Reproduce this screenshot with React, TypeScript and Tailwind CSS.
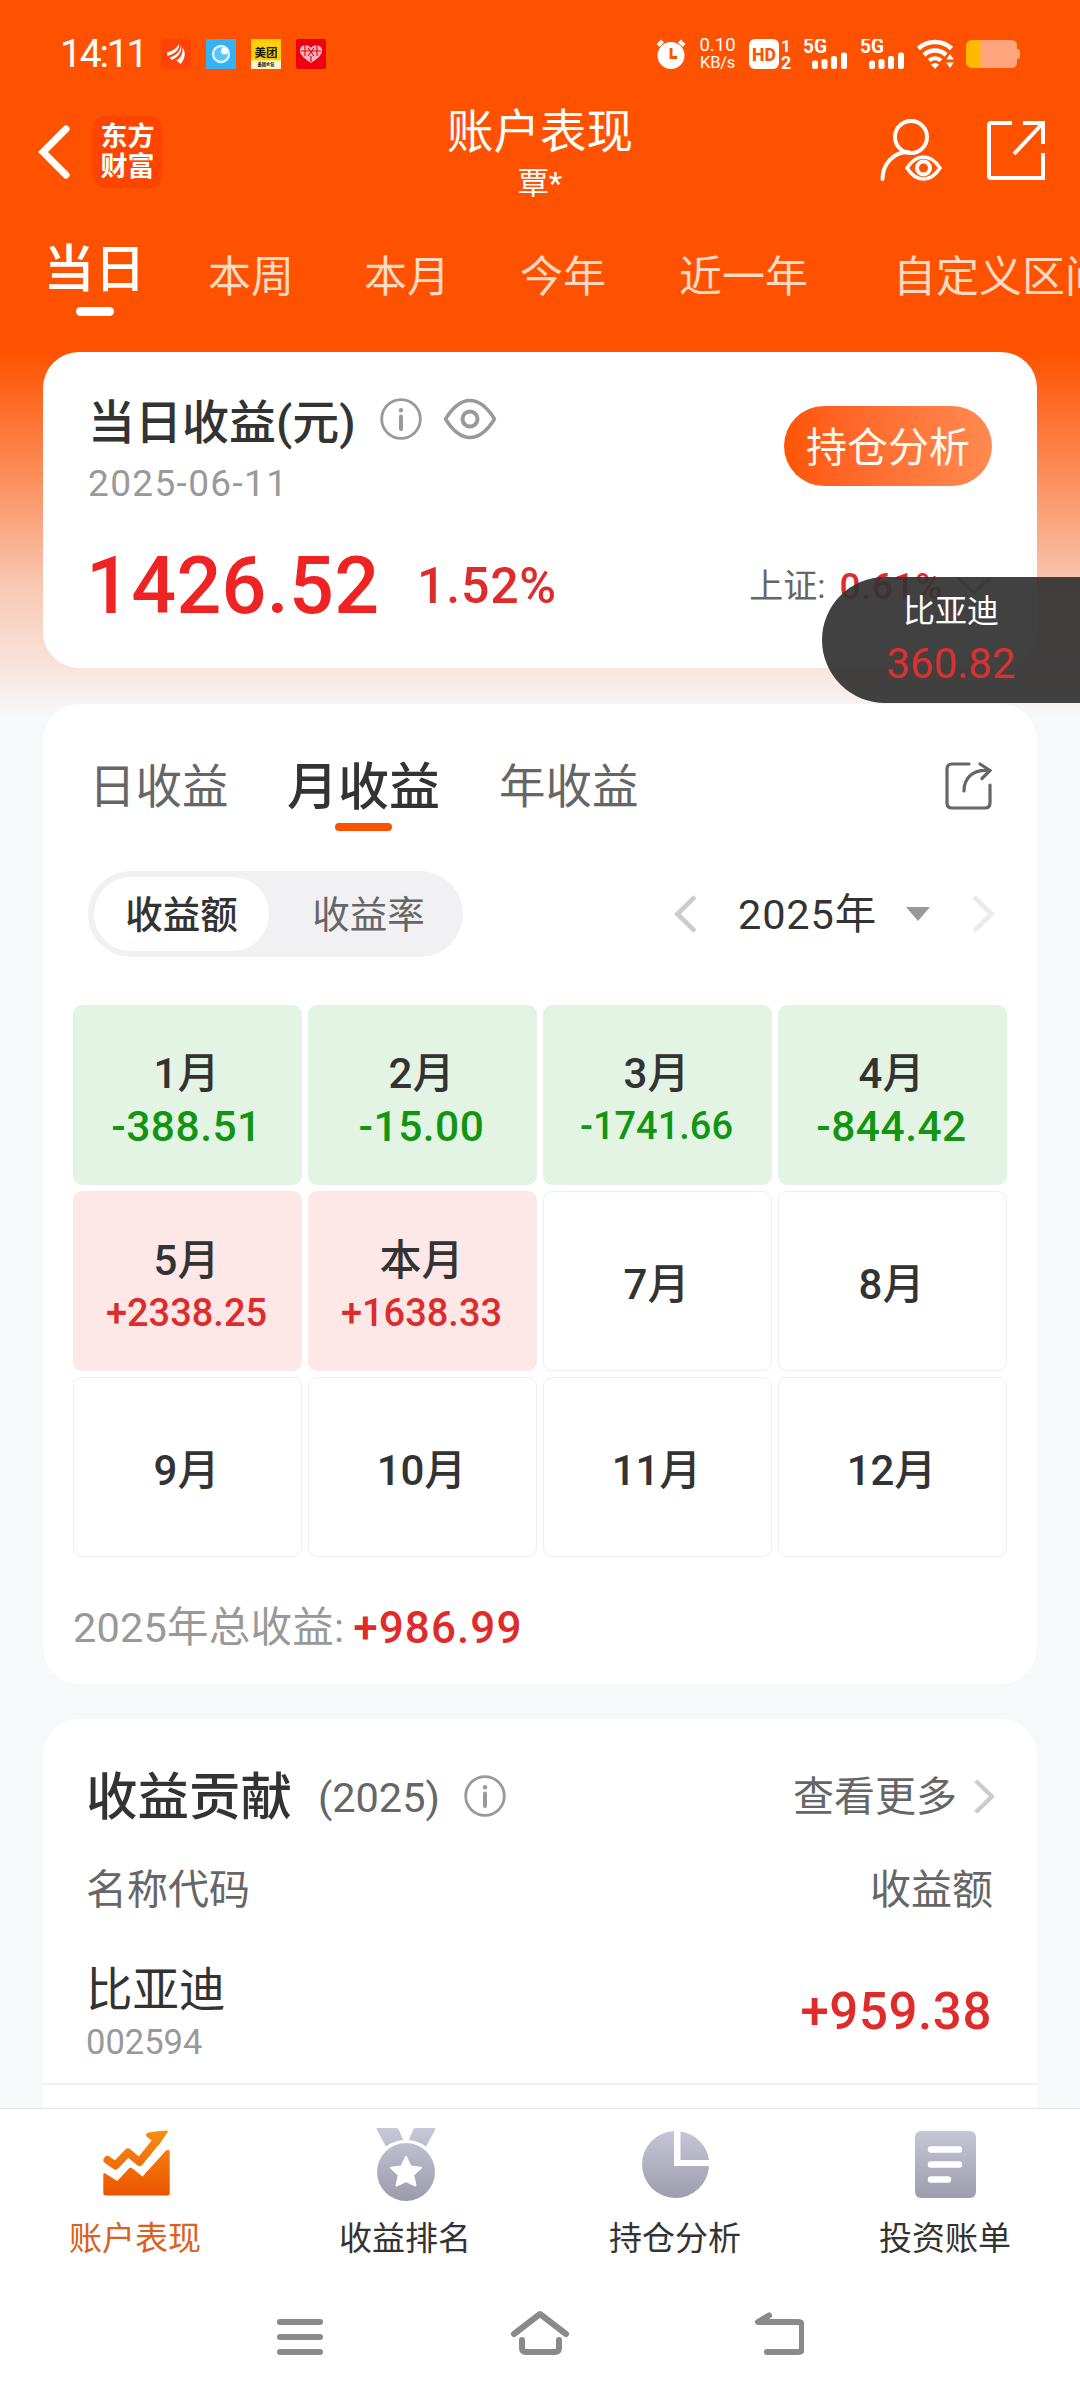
import React, { useState } from 'react';
import clsx from 'clsx';

const periods = [
  { label: '本周', className: 'ml-[63px]' },
  { label: '本月', className: 'ml-[70px]' },
  { label: '今年', className: 'ml-[70px]' },
  { label: '近一年', className: 'ml-[73px]' },
  { label: '自定义区间', className: 'ml-[85px]' },
];

const months = [
  { label: '1月', value: '-388.51' },
  { label: '2月', value: '-15.00' },
  { label: '3月', value: '-1741.66' },
  { label: '4月', value: '-844.42' },
  { label: '5月', value: '+2338.25' },
  { label: '本月', value: '+1638.33' },
  { label: '7月' },
  { label: '8月' },
  { label: '9月' },
  { label: '10月' },
  { label: '11月' },
  { label: '12月' },
];

const InfoIcon = ({ className }: { className?: string }) => (
  <svg className={className} width="42" height="42" viewBox="0 0 42 42" fill="none">
    <circle cx="21" cy="21" r="19.3" stroke="#999" strokeWidth="2.8" />
    <circle cx="21" cy="12.3" r="2.2" fill="#999" />
    <path d="M21 18.5v12.5" stroke="#999" strokeWidth="4" strokeLinecap="round" />
  </svg>
);

const Chevron = ({ color, left, size = 38, className }: { color: string; left?: boolean; size?: number; className?: string }) => (
  <svg className={className} width={size * 0.6} height={size} viewBox="0 0 24 40" fill="none">
    <path d={left ? 'M22 2 3.5 20 22 38' : 'M2 2 20.5 20 2 38'} stroke={color} strokeWidth="5" />
  </svg>
);

const Signal = ({ className }: { className?: string }) => (
  <svg className={className} width="46" height="30" viewBox="0 0 46 30" fill="#fff">
    <text x="0" y="14" fontSize="19.5" fontWeight="700" textLength="24" lengthAdjust="spacingAndGlyphs">5G</text>
    <rect x="9" y="21.5" width="6" height="8.5" rx="2.2" />
    <rect x="18.5" y="20" width="6" height="10" rx="2.2" />
    <rect x="28" y="17" width="6" height="13" rx="2.2" />
    <rect x="38" y="13.5" width="6" height="16.5" rx="2.2" />
  </svg>
);

const StatusBar = () => (
  <div className="flex h-[100px] shrink-0 items-center pt-[8px] pr-[59px] pl-[60px] text-white">
    <span className="w-[101px] text-[39px] leading-none tracking-[-2.2px]">14:11</span>
    <div className="flex gap-[15px]">
      <svg width="30" height="30" viewBox="0 0 30 30">
        <rect width="30" height="30" rx="3" fill="#ff4208" />
        <path d="M6 13.500C12 12 16 9 18 5c1 5-4 10-11.500 12zM8.500 18.500c7-2 11-6 11.500-12.500 1.500 7-3 12.500-9.500 15zM15.500 21.500c4.500-3 6.500-7 6-13 3.500 5 3 11-2 16.500z" fill="#fff" />
      </svg>
      <svg width="30" height="30" viewBox="0 0 30 30">
        <rect width="30" height="30" fill="#35b2f4" />
        <circle cx="15" cy="15" r="8" fill="#5cc3fa" stroke="#d5f3ff" strokeWidth="2.4" />
        <circle cx="18.5" cy="12" r="3.4" fill="#fff" />
      </svg>
      <svg width="30" height="30" viewBox="0 0 30 30">
        <rect width="30" height="30" rx="1" fill="#ffd00a" />
        <rect y="21.500" width="30" height="8.500" fill="#fff6d0" />
        <text x="15" y="18" fontSize="11.500" fontWeight="700" textAnchor="middle" fill="#1a1a00">美团</text>
        <text x="15" y="27.300" fontSize="4.200" fontWeight="900" textAnchor="middle" fill="#1a1a00">美团众包</text>
      </svg>
      <svg width="30" height="30" viewBox="0 0 30 30">
        <rect width="30" height="30" rx="2" fill="#ee0011" />
        <path d="M15 24C9 20 4 16.500 4 11.500 4 5.500 12 4.500 15 9c3-4.500 11-3.500 11 2.500C26 16.500 21 20 15 24z" fill="#f9b9bd" />
        <path d="M9 6v11M21 6v11M5 12h20M12 9l6 8M18 9l-6 8M15 17v6" stroke="#ee0011" strokeWidth="1.200" />
      </svg>
    </div>

    <div className="ml-auto flex items-center">
      <svg width="30" height="30" viewBox="0 0 30 30" fill="none">
        <circle cx="15" cy="16.500" r="13.500" fill="#fff" />
        <path d="M2 6.500 6.500 2M28 6.500 23.500 2" stroke="#fff" strokeWidth="4" />
        <path d="M15 9v9.500h6" stroke="#ff5200" strokeWidth="2.800" />
      </svg>
      <div className="ml-[13px] w-[37px] text-center text-[18.500px] leading-[17px]">
        <div>0.10</div>
        <div className="text-[16.500px] tracking-[-0.300px]">KB/s</div>
      </div>
      <svg className="ml-[13px]" width="44" height="31" viewBox="0 0 44 31">
        <rect width="30" height="30" rx="6" fill="#fff" />
        <text x="15" y="21.500" fontSize="18" fontWeight="800" textAnchor="middle" fill="#ff5200" textLength="24" lengthAdjust="spacingAndGlyphs">HD</text>
        <text x="32" y="12.500" fontSize="17" fontWeight="700" fill="#fff">1</text>
        <text x="32" y="30" fontSize="18" fontWeight="700" fill="#fff">2</text>
      </svg>
      <Signal className="ml-[10px]" />
      <Signal className="ml-[11px]" />
      <svg className="ml-[11px]" width="38" height="30" viewBox="0 0 38 30" fill="none">
        <path d="M1.500 9.500a24 24 0 0 1 33 0" stroke="#fff" strokeWidth="4.500" />
        <path d="M7 16a16 16 0 0 1 22 0" stroke="#fff" strokeWidth="4.500" />
        <path d="M12 21.500a9 9 0 0 1 12 0" stroke="#fff" strokeWidth="4" />
        <path d="M14 25.500q4-3 8 0l-4 4.500z" fill="#fff" />
        <path d="m33 15 3.800 5.500h-7.600zM33 29l3.800-5.500h-7.600z" fill="#fff" />
      </svg>
      <svg className="ml-[11px]" width="55" height="28" viewBox="0 0 55 28">
        <path d="M7 0h38q6 0 6 6v3q3 0 3 3v4q0 3-3 3v3q0 6-6 6H7q-7 0-7-7V7q0-7 7-7z" fill="#ffa57d" />
        <path d="M14.500 0H7Q0 0 0 7v14q0 7 7 7h7.500z" fill="#ffb900" />
      </svg>
    </div>
  </div>
);

const Header = () => (
  <div className="grid h-[104px] shrink-0 grid-cols-[1fr_auto_1fr] text-white">
    <div className="flex h-[103px] items-center pl-[38px]">
      <svg width="32" height="54" viewBox="0 0 32 54" fill="none">
        <path d="M28 4 5 27l23 23" stroke="#fff" strokeWidth="7" strokeLinecap="round" />
      </svg>
      <div className="ml-[22px] flex h-[72px] w-[71px] flex-col items-center justify-center rounded-[14px] bg-[#ff4400] text-[27px] leading-[30px] font-bold">
        <span>东方</span>
        <span>财富</span>
      </div>
    </div>
    <div className="flex flex-col items-center pt-[6px]">
      <h1 className="text-[46.500px] leading-[52px]">账户表现</h1>
      <span className="mt-[8px] text-[31px] leading-[36px]">覃*</span>
    </div>
    <div className="flex h-[100px] items-center justify-end pr-[34px]">
      <svg width="64" height="64" viewBox="0 0 64 64" fill="none" stroke="#fff" strokeWidth="4">
        <circle cx="33" cy="19" r="16" />
        <path d="M4.500 61c0-15 11-27 26-27" strokeLinecap="round" />
        <path d="M29 50q7-11 16.500-11T62 50q-7 11-16.500 11T29 50z" strokeWidth="3.500" />
        <circle cx="45.500" cy="50" r="6.500" />
      </svg>
      <svg className="ml-[44px]" width="60" height="62" viewBox="0 0 60 62" fill="none" stroke="#fff" strokeWidth="4">
        <path d="M26 4H5Q3 4 3 6v51q0 2 2 2h52V34M37 4h20v21M57 4 28 35" />
      </svg>
    </div>
  </div>
);

const SummaryCard = () => (
  <section className="mx-[43px] h-[316px] shrink-0 rounded-[36px] bg-white px-[45px]">
    <div className="flex">
      <div>
        <div className="flex items-center pt-[41px]">
          <h2 className="text-[47px] leading-[60px] font-medium text-[#333]">当日收益(元)</h2>
          <InfoIcon className="mb-[8px] ml-[24px]" />
          <svg className="mb-[8px] ml-[21px]" width="54" height="42" viewBox="0 0 54 42" fill="none" stroke="#999" strokeWidth="3.500">
            <path d="M2.500 21Q14 2.500 27 2.500T51.500 21Q40 39.500 27 39.500T2.500 21z" strokeLinejoin="round" />
            <circle cx="27" cy="21" r="7.500" strokeWidth="4" />
          </svg>
        </div>
        <div className="mt-[9px] text-[37px] leading-[44px] tracking-[1.350px] text-[#999]">2025-06-11</div>
      </div>
      <button className="mt-[54px] ml-auto h-[80px] w-[208px] rounded-full bg-linear-to-r from-[#ff5400] to-[#ff8a50] text-[41px] leading-[84px] text-[#fff8ee]">
        持仓分析
      </button>
    </div>
    <div className="mt-[35px] flex h-[90px] items-center">
      <span className="ml-[-2px] w-[331px] text-[79px] leading-none font-medium tracking-[0.300px] text-[#ee2424]">1426.52</span>
      <span className="text-[50px] leading-none font-medium tracking-[0.800px] text-[#e02b2b]">1.52%</span>
      <div className="ml-auto flex items-center text-[34px] leading-none">
        <span className="text-[#666]">上证:</span>
        <span className="ml-[14px] text-[37px] font-medium tracking-[0.600px] text-[#e02b2b]">0.61%</span>
        <svg className="ml-[13px]" width="36" height="20" viewBox="0 0 36 20" fill="none">
          <path d="m2 2 16 15L34 2" stroke="#999" strokeWidth="3" />
        </svg>
      </div>
    </div>
  </section>
);

const MonthCell = ({ label, value }: { label: string; value?: string }) => (
  <div
    className={clsx(
      'flex h-[180px] flex-col items-center rounded-[9px] pr-[2px]',
      !value && 'justify-center border-[1.500px] border-[#eee] bg-white pt-[7px]',
      value?.startsWith('-') && 'bg-[#e3f4e4] pt-[41px] text-[#129612]',
      value?.startsWith('+') && 'bg-[#fde8e7] pt-[42px] text-[#dc2d2d]'
    )}
  >
    <span className="text-[42px] leading-[56px] font-medium text-[#333]">{label}</span>
    {value && (
      <span className={clsx('leading-[49px] font-medium', value.length > 7 ? 'text-[38px]' : 'text-[42.500px] tracking-[0.500px]')}>{value}</span>
    )}
  </div>
);

const ProfitCalendar = () => {
  const [mode, setMode] = useState('amount');

  return (
    <section className="mx-[43px] mt-[36px] h-[980px] shrink-0 rounded-[36px] bg-white">
      <div className="flex h-[167px] items-center pr-[45px] pl-[46px] text-[#666]">
        <span className="w-[198px] text-[46.500px]">日收益</span>
        <div className="relative w-[212px] pt-[2px] text-[51px] font-medium text-[#333]">
          月收益
          <span className="absolute bottom-[-4px] left-[48px] h-[8px] w-[57px] rounded-full bg-[#ff5200]" />
        </div>
        <span className="text-[46.500px]">年收益</span>
        <svg className="mb-[6px] ml-auto" width="48" height="50" viewBox="0 0 48 50" fill="none" stroke="#666" strokeWidth="3.200" strokeLinecap="round">
          <path d="M25 4H8Q3 4 3 9v34q0 5 5 5h33q5 0 5-5V25" />
          <path d="M20 31C20 18 29 9 45 10.500M36 4l10 6.500-8 8" />
        </svg>
      </div>

      <div className="flex h-[86px] items-center pr-[42px] pl-[45px]">
        <div className="flex h-[86px] w-[375px] rounded-full bg-[#f1f1f4] p-[6px] text-[37.500px]">
          <button
            onClick={() => setMode('amount')}
            className={clsx('w-[175px] rounded-full pt-[3px]', mode === 'amount' ? 'bg-white font-medium text-[#333]' : 'text-[#666]')}
          >
            收益额
          </button>
          <button
            onClick={() => setMode('rate')}
            className={clsx('ml-[12px] w-[175px] rounded-full pt-[3px]', mode === 'rate' ? 'bg-white font-medium text-[#333]' : 'text-[#666]')}
          >
            收益率
          </button>
        </div>
        <Chevron left color="#ccc" className="ml-auto" />
        <span className="ml-[41px] pt-[3px] text-[41.500px] tracking-[0.900px] text-[#333]">2025年</span>
        <svg className="ml-[29px]" width="24" height="14" viewBox="0 0 24 14">
          <path d="M0 0h24L12 14z" fill="#999" />
        </svg>
        <Chevron color="#ebebeb" className="ml-[42px]" />
      </div>

      <div className="mx-[30px] mt-[48px] grid grid-cols-4 gap-[6px]">
        {months.map((month) => (
          <MonthCell key={month.label} {...month} />
        ))}
      </div>

      <div className="mt-[41px] flex items-center pl-[30px] text-[41.500px] leading-[60px] tracking-[0.200px] text-[#999]">
        2025年总收益:
        <span className="ml-[9px] text-[44px] font-medium tracking-[1.100px] text-[#e02b2b]">+986.99</span>
      </div>
    </section>
  );
};

const ContributionCard = () => (
  <section className="mx-[43px] mt-[35px] h-[389px] shrink-0 overflow-hidden rounded-t-[36px] bg-white">
    <div className="flex h-[154px] items-center pr-[42px] pl-[43px] text-[#666]">
      <h2 className="pt-[3px] text-[51.500px] font-medium text-[#333]">收益贡献</h2>
      <span className="ml-[26px] pt-[5px] text-[41.500px]">(2025)</span>
      <InfoIcon className="ml-[24px]" />
      <span className="ml-auto pt-[4px] text-[41px]">查看更多</span>
      <Chevron color="#ccc" size={35} className="ml-[17px]" />
    </div>
    <div className="flex justify-between pt-[2px] pr-[44px] pl-[43px] text-[41px] leading-[30px] text-[#666]">
      <span>名称代码</span>
      <span>收益额</span>
    </div>
    <div className="mt-[37px] flex h-[143px] items-center justify-between border-b-2 border-[#eee] pr-[45px] pb-[1px] pl-[43px]">
      <div>
        <div className="text-[46.500px] leading-[60px] text-[#333]">比亚迪</div>
        <div className="text-[34.500px] leading-[44px] text-[#999]">002594</div>
      </div>
      <span className="text-[51px] font-medium tracking-[0.600px] text-[#e02b2b]">+959.38</span>
    </div>
  </section>
);

const navItems = [
  {
    label: '账户表现',
    active: true,
    icon: (
      <>
        <path d="m7.500 33 8 5.500L28 25.500l11.500 9.500L58 12" stroke="url(#navOrange)" strokeWidth="8" strokeLinecap="round" strokeLinejoin="round" fill="none" />
        <path d="M51.500 13.500 46.500 9.500q-1.500-3 2-4Q58 4 66.500 3.500q2 0 1 2L58 19z" fill="url(#navOrange)" />
        <path d="M3.300 47.500q0-2.500 2-1l12 7.500 12-13q1-1 2.500 0L42.500 49.500 66 23.500q3.700-2 3.700 1V66q0 2.500-2.500 2.500H5.800q-2.500 0-2.500-2.500z" fill="url(#navOrange)" />
      </>
    ),
  },
  {
    label: '收益排名',
    icon: (
      <>
        <path d="M7 1h19q2 0 3 2l4 10q-10 1-17 6.500L7 3q-1-2 0-2zM65 1H46q-2 0-3 2l-4 10q10 1 17 6.500L65 3q1-2 0-2z" fill="url(#navGray)" />
        <circle cx="36" cy="45" r="29" fill="url(#navGray)" />
        <path d="m36 30 4.500 9.500 10.500 1.300-7.800 7.200 2.300 10.500L36 54l-9.500 4.500L28.800 48 21 40.800l10.500-1.300z" fill="#fff" stroke="#fff" strokeWidth="2" strokeLinejoin="round" />
      </>
    ),
  },
  {
    label: '持仓分析',
    icon: (
      <>
        <path d="M34 4a33.500 33.500 0 1 0 35 35H34z" fill="url(#navGray)" />
        <path d="M40.500 4.500A33.500 33.500 0 0 1 69 33H40.500z" fill="url(#navGray)" />
      </>
    ),
  },
  {
    label: '投资账单',
    icon: (
      <>
        <rect x="5" y="4" width="61" height="67" rx="6" fill="url(#navGray)" />
        <path d="M21 22.500h28M21 37.500h28M21 52.500h17" stroke="#fff" strokeWidth="6.500" strokeLinecap="round" />
      </>
    ),
  },
];

const BottomNav = () => (
  <nav className="h-[292px] shrink-0 border-t border-[#e6e6e6] bg-white">
    <svg className="absolute" width="0" height="0">
      <defs>
        <linearGradient id="navOrange" gradientUnits="userSpaceOnUse" x1="0" y1="4" x2="0" y2="70">
          <stop stopColor="#f78e10" />
          <stop offset="1" stopColor="#eb5200" />
        </linearGradient>
        <linearGradient id="navGray" gradientUnits="userSpaceOnUse" x1="0" y1="0" x2="0" y2="74">
          <stop stopColor="#c9c8d8" />
          <stop offset="1" stopColor="#9c9bab" />
        </linearGradient>
      </defs>
    </svg>
    <div className="grid h-[160px] grid-cols-4 pt-[18px]">
      {navItems.map((item) => (
        <div key={item.label} className="flex flex-col items-center">
          <svg className="ml-[2px]" width="72" height="75" viewBox="0 0 72 75">{item.icon}</svg>
          <span className={clsx('mt-[15px] text-[33px] leading-[44px]', item.active ? 'text-[#d9621f]' : 'text-[#333]')}>{item.label}</span>
        </div>
      ))}
    </div>
    <div className="flex h-[132px] items-start justify-center pt-[40px]">
      <svg width="528" height="50" viewBox="0 0 528 50" fill="none" stroke="#8a8a8a" strokeWidth="6" strokeLinecap="round" strokeLinejoin="round">
        <path d="M4 13h40M4 28h40M4 43h40" />
        <path d="m238 25 26-20 26 20M246 31v8q0 4 4 4h29q4 0 4-4v-8" />
        <path d="M493 6.500 482 13h40q4 0 4 4v22q0 4-4 4h-31" />
      </svg>
    </div>
  </nav>
);

const App = () => {
  return (
    <div className="relative flex h-[2400px] w-[1080px] flex-col overflow-hidden bg-[#f7f8fa] bg-[linear-gradient(to_bottom,#ff5200_0,#ff5200_352px,#fb9a6d_500px,#f8c8b2_585px,#f8e3dc_665px,#f7f8fa_716px)] font-['Roboto','Noto_Sans_CJK_SC',sans-serif]">
      <StatusBar />
      <Header />
      <div className="flex h-[148px] shrink-0 overflow-hidden pl-[44px] whitespace-nowrap text-white">
        <div className="flex w-[101px] flex-col items-center pt-[34px]">
          <span className="text-[51px] leading-[64px] font-medium">当日</span>
          <span className="mt-[5px] h-[9px] w-[38px] rounded-full bg-white" />
        </div>
        {periods.map((period) => (
          <span key={period.label} className={clsx('shrink-0 pt-[43px] text-[43px] leading-[60px] text-[#ffd9c2]', period.className)}>
            {period.label}
          </span>
        ))}
      </div>
      <SummaryCard />
      <ProfitCalendar />
      <ContributionCard />
      <BottomNav />

      {/* floating quote ticker */}
      <div className="absolute top-[577px] right-0 flex h-[126px] w-[258px] flex-col items-center rounded-l-full bg-[#333]/93 pt-[13px]">
        <span className="text-[32px] leading-[42px] text-white">比亚迪</span>
        <span className="mt-[9px] text-[42px] leading-[46px] text-[#d93030]">360.82</span>
      </div>
    </div>
  );
};

export default App;
